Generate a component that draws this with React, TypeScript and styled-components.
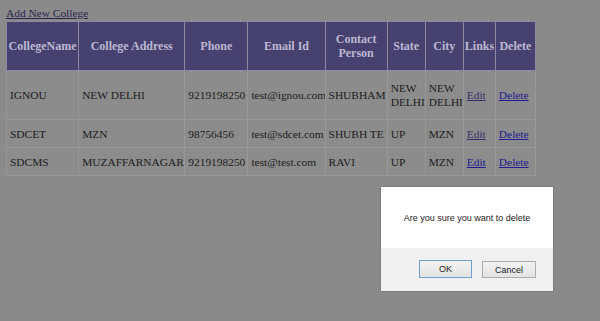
import React from 'react';
import styled, { createGlobalStyle } from 'styled-components';

const GlobalStyle = createGlobalStyle`
  html, body {
    margin: 0;
    padding: 0;
    background: #8a8a8a;
  }
`;

const Page = styled.div`
  position: relative;
  width: 600px;
  height: 321px;
  padding: 6px 0 0 6px;
  box-sizing: border-box;
  background: #8a8a8a;
  font-family: "Liberation Serif", "Times New Roman", serif;
  font-size: 11.4px;
  color: #1c1c1c;
  overflow: hidden;
`;

const AddLink = styled.a`
  display: block;
  width: max-content;
  color: #2c2550;
  text-decoration: underline;
  font-size: 11.4px;
  line-height: 15px;
`;

const Table = styled.table`
  width: 530px;
  table-layout: fixed;
  border-collapse: collapse;
  border: 1px solid #707070;
  background: #8c8c8c;
`;

const HeadCell = styled.th`
  background: #47416f;
  color: #bcb8d2;
  font-size: 12px;
  font-weight: bold;
  text-align: center;
  padding: 0 1px;
  height: 48px;
  line-height: 14px;
  border: 1px solid #8e8aa6;
`;

const Row = styled.tr<{ $tall?: boolean }>`
  height: ${p => (p.$tall ? '49px' : '28px')};
`;

const Cell = styled.td`
  padding: 0 1px 0 3px;
  line-height: 14px;
  overflow: hidden;
  border: 1px solid #989898;
`;

const CellLink = styled.a<{ $visited?: boolean }>`
  color: ${p => (p.$visited ? '#3d2c6a' : '#231c8e')};
  text-decoration: underline;
`;

const Dialog = styled.div`
  position: absolute;
  left: 381px;
  top: 187px;
  width: 172px;
  height: 104px;
  display: flex;
  flex-direction: column;
  background: #ffffff;
  box-shadow: 0 0 2px rgba(0, 0, 0, 0.25);
  font-family: "Liberation Sans", Arial, sans-serif;
  font-size: 9px;
  color: #1a1a1a;
`;

const Message = styled.div`
  flex: 0 0 61px;
  display: flex;
  align-items: center;
  justify-content: center;
`;

const Footer = styled.div`
  flex: 1;
  display: flex;
  justify-content: flex-end;
  align-items: flex-start;
  gap: 10px;
  padding: 12px 17px 0 0;
  background: #f0f0f0;
`;

const DialogButton = styled.button<{ $focused?: boolean }>`
  width: ${p => (p.$focused ? '53px' : '54px')};
  height: ${p => (p.$focused ? '18px' : '17px')};
  margin-top: ${p => (p.$focused ? '0' : '1px')};
  padding: 0;
  font-family: "Liberation Sans", Arial, sans-serif;
  font-size: 9px;
  color: #1a1a1a;
  background: linear-gradient(#f2f2f2, #e3e3e3);
  border: 1px solid ${p => (p.$focused ? '#6fa0d2' : '#adadad')};
  border-radius: 0;
`;

const widths = [72, 106, 63, 77, 62, 38, 38, 32, 40];
const headers = ['CollegeName', 'College Address', 'Phone', 'Email Id', 'Contact Person', 'State', 'City', 'Links', 'Delete'];

const rows = [
  { name: 'IGNOU', address: 'NEW DELHI', phone: '9219198250', email: 'test@ignou.com', person: 'SHUBHAM', state: 'NEW DELHI', city: 'NEW DELHI', visited: true, tall: true },
  { name: 'SDCET', address: 'MZN', phone: '98756456', email: 'test@sdcet.com', person: 'SHUBH TE', state: 'UP', city: 'MZN', visited: true, tall: false },
  { name: 'SDCMS', address: 'MUZAFFARNAGAR', phone: '9219198250', email: 'test@test.com', person: 'RAVI', state: 'UP', city: 'MZN', visited: false, tall: false },
];

export default function App() {
  return (
    <>
      <GlobalStyle />
      <Page>
        <AddLink href="#">Add New College</AddLink>
        <Table>
          <colgroup>
            {widths.map((w, i) => (
              <col key={i} style={{ width: w }} />
            ))}
          </colgroup>
          <thead>
            <tr>
              {headers.map(h => (
                <HeadCell key={h}>{h}</HeadCell>
              ))}
            </tr>
          </thead>
          <tbody>
            {rows.map(r => (
              <Row key={r.name} $tall={r.tall}>
                <Cell>{r.name}</Cell>
                <Cell>{r.address}</Cell>
                <Cell>{r.phone}</Cell>
                <Cell>{r.email}</Cell>
                <Cell>{r.person}</Cell>
                <Cell>{r.state}</Cell>
                <Cell>{r.city}</Cell>
                <Cell>
                  <CellLink href="#" $visited={r.visited}>Edit</CellLink>
                </Cell>
                <Cell>
                  <CellLink href="#">Delete</CellLink>
                </Cell>
              </Row>
            ))}
          </tbody>
        </Table>
        <Dialog>
          <Message>Are you sure you want to delete</Message>
          <Footer>
            <DialogButton $focused>OK</DialogButton>
            <DialogButton>Cancel</DialogButton>
          </Footer>
        </Dialog>
      </Page>
    </>
  );
}
